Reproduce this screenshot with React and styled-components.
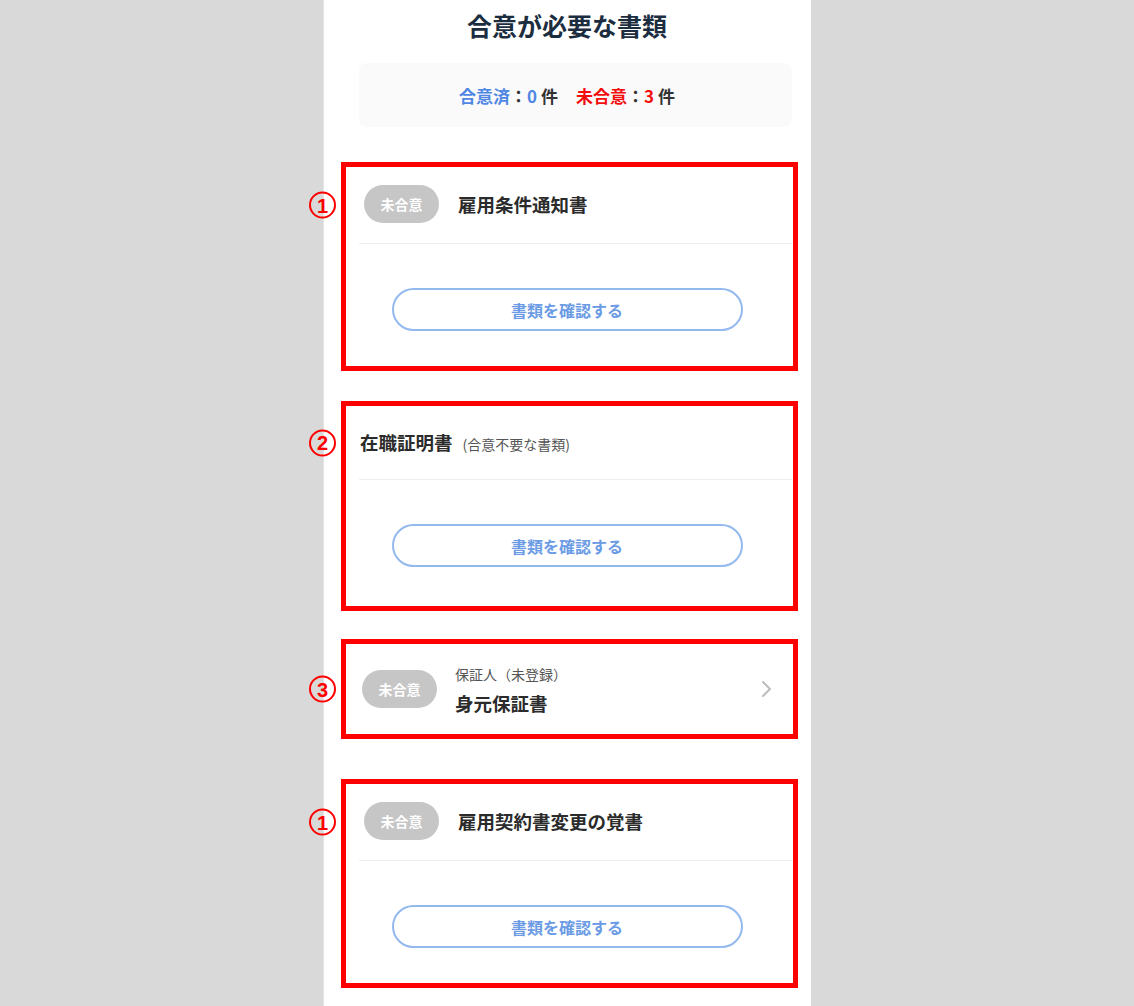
import React from "react";
import styled, { createGlobalStyle } from "styled-components";

const Global = createGlobalStyle`
  html, body { margin: 0; padding: 0; }
  body {
    background: #d9d9d9;
    font-family: "Noto Sans CJK JP", "Noto Sans", "Liberation Sans", sans-serif;
    color: #333;
  }
  * { box-sizing: border-box; }
`;

const Column = styled.main`
  width: 488px;
  min-height: 1006px;
  margin: 0 auto;
  background: #fff;
  border-left: 1px solid #e4e4e4;
  padding: 8px 19px 40px 35px;
  display: flex;
  flex-direction: column;
`;

const Title = styled.h1`
  margin: 0;
  padding-right: 17px;
  text-align: center;
  font-size: 25px;
  line-height: 34px;
  font-weight: 700;
  color: #1c2d40;
`;

const Summary = styled.div`
  margin-top: 21px;
  height: 64px;
  background: #fafafa;
  border-radius: 8px;
  display: flex;
  align-items: center;
  justify-content: center;
  gap: 18px;
  padding-right: 17px;
  font-size: 17px;
  font-weight: 700;
`;

const Count = styled.span`
  color: #333;
`;

const Tone = styled.span`
  color: ${(p) => (p.$tone === "red" ? "#f30d0d" : "#4f87e3")};
`;

const Annotated = styled.section`
  position: relative;
  margin: ${(p) => p.$mt}px -6px 0 -18px;
  border: 5px solid #ff0000;
  padding: 0 1px 0 13px;
`;

const Marker = styled.span`
  position: absolute;
  left: -50px;
  top: 50%;
  transform: translateY(-50%);
  width: 27px;
  height: 27px;
  border: 2px solid #ff0000;
  border-radius: 50%;
  color: #ff0000;
  font-family: "Liberation Sans", Arial, sans-serif;
  font-size: 20px;
  font-weight: 700;
  display: flex;
  align-items: center;
  justify-content: center;
  line-height: 1;
`;

const Card = styled.div`
  background: #fff;
`;

const Header = styled.div`
  position: relative;
  display: flex;
  align-items: center;
  gap: 19px;
  padding: ${(p) => (p.$plain ? "21px 0 20px 1px" : "18px 0 20px 5px")};
  border-bottom: 1px solid #efefef;
`;

const Badge = styled.span`
  flex: none;
  width: 75px;
  height: 38px;
  border-radius: 19px;
  background: #c6c6c6;
  color: #fff;
  font-size: 14px;
  font-weight: 700;
  display: flex;
  align-items: center;
  justify-content: center;
`;

const DocTitle = styled.span`
  font-size: 18.5px;
  line-height: 30px;
  font-weight: 700;
  color: #2b2b2b;
`;

const Note = styled.span`
  margin-left: 10px;
  font-size: 14px;
  font-weight: 400;
  color: #555;
`;

const Body = styled.div`
  display: flex;
  justify-content: center;
  padding: 44px 17px ${(p) => p.$pb}px 0;
`;

const ConfirmButton = styled.button`
  width: 351px;
  height: 43px;
  border: 2px solid #93b9ef;
  border-radius: 22px;
  background: #fff;
  color: #6b9be4;
  font-family: inherit;
  font-size: 16px;
  font-weight: 700;
  cursor: pointer;
`;

const Row = styled.div`
  position: relative;
  display: flex;
  align-items: center;
  gap: 18px;
  padding: 18px 19px 18px 3px;
`;

const Texts = styled.div`
  flex: 1;
  display: flex;
  flex-direction: column;
`;

const Sub = styled.span`
  font-size: 14px;
  line-height: 24px;
  margin-bottom: 4px;
  color: #555;
`;

const Main = styled.span`
  font-size: 18.5px;
  line-height: 26px;
  font-weight: 700;
  color: #2b2b2b;
`;

const Chevron = () => (
  <svg width="12" height="18" viewBox="0 0 12 18" fill="none">
    <polyline points="2,2 9,9 2,16" stroke="#bdbdbd" strokeWidth="2" strokeLinecap="round" strokeLinejoin="round" />
  </svg>
);

function DocCard({ mt, num, badge, title, note, pb }) {
  return (
    <Annotated $mt={mt}>
      <Card>
        <Header $plain={!badge}>
          <Marker>{num}</Marker>
          {badge && <Badge>{badge}</Badge>}
          <DocTitle>
            {title}
            {note && <Note>{note}</Note>}
          </DocTitle>
        </Header>
        <Body $pb={pb}>
          <ConfirmButton>書類を確認する</ConfirmButton>
        </Body>
      </Card>
    </Annotated>
  );
}

export default function App() {
  return (
    <>
      <Global />
      <Column>
        <Title>合意が必要な書類</Title>
        <Summary>
          <Count>
            <Tone $tone="blue">合意済</Tone>：<Tone $tone="blue">0</Tone> 件
          </Count>
          <Count>
            <Tone $tone="red">未合意</Tone>：<Tone $tone="red">3</Tone> 件
          </Count>
        </Summary>

        <DocCard mt={35} num="1" badge="未合意" title="雇用条件通知書" pb={35} />
        <DocCard mt={30} num="2" title="在職証明書" note="(合意不要な書類)" pb={39} />

        <Annotated $mt={28}>
          <Card>
            <Row>
              <Marker>3</Marker>
              <Badge>未合意</Badge>
              <Texts>
                <Sub>保証人（未登録）</Sub>
                <Main>身元保証書</Main>
              </Texts>
              <Chevron />
            </Row>
          </Card>
        </Annotated>

        <DocCard mt={40} num="1" badge="未合意" title="雇用契約書変更の覚書" pb={35} />
      </Column>
    </>
  );
}
